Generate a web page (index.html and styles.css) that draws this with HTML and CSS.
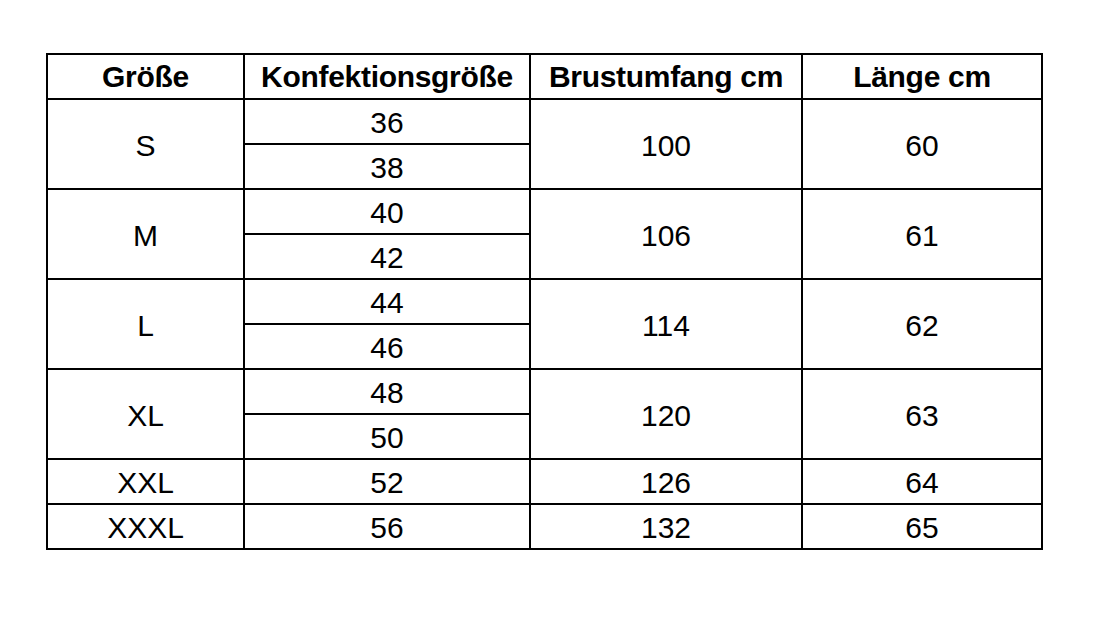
FILE: index.html
```html
<!DOCTYPE html>
<html lang="de">
<head>
<meta charset="utf-8">
<title>Größentabelle</title>
<link rel="stylesheet" href="styles.css">
</head>
<body>
<table class="size-table">
  <colgroup>
    <col class="c1"><col class="c2"><col class="c3"><col class="c4">
  </colgroup>
  <thead>
    <tr><th>Größe</th><th>Konfektionsgröße</th><th>Brustumfang cm</th><th>Länge cm</th></tr>
  </thead>
  <tbody>
    <tr><td rowspan="2">S</td><td>36</td><td rowspan="2">100</td><td rowspan="2">60</td></tr>
    <tr><td>38</td></tr>
    <tr><td rowspan="2">M</td><td>40</td><td rowspan="2">106</td><td rowspan="2">61</td></tr>
    <tr><td>42</td></tr>
    <tr><td rowspan="2">L</td><td>44</td><td rowspan="2">114</td><td rowspan="2">62</td></tr>
    <tr><td>46</td></tr>
    <tr><td rowspan="2">XL</td><td>48</td><td rowspan="2">120</td><td rowspan="2">63</td></tr>
    <tr><td>50</td></tr>
    <tr><td>XXL</td><td>52</td><td>126</td><td>64</td></tr>
    <tr><td>XXXL</td><td>56</td><td>132</td><td>65</td></tr>
  </tbody>
</table>
</body>
</html>
```

FILE: styles.css
```css
html, body {
  margin: 0;
  padding: 0;
  background: #ffffff;
}
body {
  padding: 53px 0 0 46px;
}
.size-table {
  border-collapse: collapse;
  table-layout: fixed;
  width: 995px;
  font-family: "Liberation Sans", Arial, sans-serif;
  color: #000;
}
.c1 { width: 197px; }
.c2 { width: 286px; }
.c3 { width: 272px; }
.c4 { width: 240px; }
.size-table th,
.size-table td {
  border: 2px solid #000;
  text-align: center;
  vertical-align: middle;
  padding: 0;
  line-height: 1;
}
.size-table th {
  height: 43px;
  font-weight: bold;
  font-size: 30px;
  letter-spacing: -0.3px;
}
.size-table td {
  height: 40px;
  font-size: 30px;
  padding-top: 3px;
}
```
